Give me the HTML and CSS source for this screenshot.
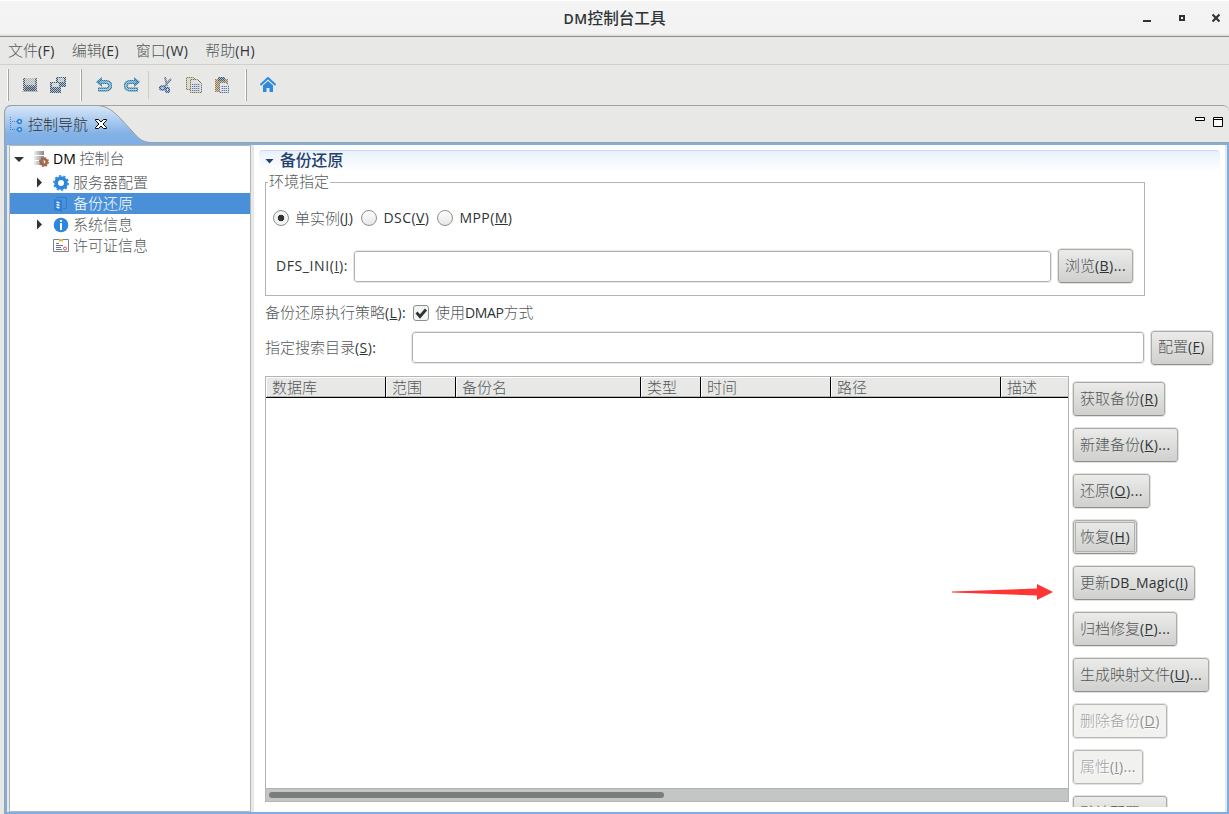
FILE: index.html
```html
<!DOCTYPE html>
<html lang="zh-CN">
<head>
    <meta charset="UTF-8">
    <title>DM控制台工具</title>
    <link rel="stylesheet" href="styles.css">
</head>
<body>
    <header class="titlebar">
        <h1><span class="en">DM</span>控制台工具</h1>
        <div class="window-buttons">
            <svg width="8" height="10"><path d="M0 8h8" stroke="#2e3436" stroke-width="2"/></svg>
            <svg width="6" height="10"><path d="M1 3h4v4h-4z" fill="none" stroke="#2e3436" stroke-width="2"/></svg>
            <svg width="8" height="10"><path d="M.5 1.500l7 7M7.500 1.500l-7 7" stroke="#2e3436" stroke-width="2.200"/></svg>
        </div>
    </header>
    <nav class="menubar">
        <span>文件<span class="en">(F)</span></span>
        <span>编辑<span class="en">(E)</span></span>
        <span>窗口<span class="en">(W)</span></span>
        <span>帮助<span class="en">(H)</span></span>
    </nav>

    <svg class="defs" width="0" height="0">
        <defs>
            <pattern id="dither" width="2" height="2" patternUnits="userSpaceOnUse">
                <path d="M0 0h1v1h-1zM1 1h1v1h-1z" fill="#e8e8e6"/>
            </pattern>
            <linearGradient id="tab-fill" x1="0" y1="0" x2="0" y2="1">
                <stop offset="0" stop-color="#d9e7f8"/>
                <stop offset=".75" stop-color="#83b2e6"/>
                <stop offset="1" stop-color="#7eaee4"/>
            </linearGradient>
            <linearGradient id="server-fill">
                <stop offset="0" stop-color="#eee"/>
                <stop offset="1" stop-color="#888"/>
            </linearGradient>
        </defs>
    </svg>

    <div class="toolbar">
        <div class="tool-group save-group">
            <svg width="16" height="16" viewBox="0 0 16 16"><path d="M1 1h14v14h-14z" fill="#4a5b72"/><path d="M3 1h10v7h-10z" fill="#aab8be"/><path d="M0 14.500h16" stroke="#b9bab8"/><path d="M1 1h14v13h-14z" fill="url(#dither)" opacity=".8"/><path d="M3 10h10v4h-10z" fill="#4a5b72" opacity=".4"/></svg>
            <svg width="16" height="16" viewBox="0 0 16 16"><path d="M6 0h10v10h-10z" fill="#3b5674"/><path d="M8 1h6v4h-6z" fill="#b3c0c7"/><path d="M0 5h11v11h-11z" fill="#3b5674"/><path d="M2 6h7v4h-7z" fill="#c5ced3"/><path d="M0 0h16v16h-16z" fill="url(#dither)" opacity=".75"/></svg>
        </div>
        <div class="tool-group edit-group">
            <svg width="16" height="16" viewBox="0 0 16 16"><path d="M3 5h7.500a3.700 3.700 0 0 1 0 7.500H2" fill="none" stroke="#2b78a8" stroke-width="4"/><path d="M0 5l6-5v10z" fill="#2b78a8"/><path d="M4 5h6.500a3.700 3.700 0 0 1 0 7.500H3" fill="none" stroke="#a8cfe4" stroke-width="1.200"/><path d="M0 0h16v16h-16z" fill="url(#dither)" opacity=".45"/></svg>
            <svg width="16" height="16" viewBox="0 0 16 16"><path d="M13 5H5.500a3.700 3.700 0 0 0 0 7.500H14" fill="none" stroke="#2b78a8" stroke-width="4"/><path d="M16 5l-6-5v10z" fill="#2b78a8"/><path d="M12 5H5.500a3.700 3.700 0 0 0 0 7.500H13" fill="none" stroke="#a8cfe4" stroke-width="1.200"/><path d="M0 0h16v16h-16z" fill="url(#dither)" opacity=".45"/></svg>
            <i class="divider"></i>
            <svg width="16" height="16" viewBox="0 0 16 16"><path d="M7 0l2 9M13 2l-7 8" stroke="#60778f" stroke-width="2"/><g fill="none" stroke="#2c5c90" stroke-width="2"><ellipse cx="4.500" cy="11" rx="2.600" ry="1.800"/><ellipse cx="9.500" cy="13" rx="1.600" ry="2.200"/></g><path d="M0 0h16v16h-16z" fill="url(#dither)" opacity=".6"/></svg>
            <svg width="16" height="16" viewBox="0 0 16 16"><path d="M.5.500h7l3 3v9h-10z" fill="#d4d2c8" stroke="#8f7c4d"/><path d="M4.500 2.500h7l4 4v9h-11z" fill="#d8dce2" stroke="#80724a"/><path d="M6 7.500h8M6 9.500h8M6 11.500h8M6 13.500h8" stroke="#6078a0"/><path d="M0 0h16v16h-16z" fill="url(#dither)" opacity=".65"/></svg>
            <svg width="16" height="16" viewBox="0 0 16 16"><path d="M1 2h13v13h-13z" fill="#a07c46"/><path d="M4 0h7v4h-7z" fill="#40586e"/><path d="M5.500 5.500h6l3 3v7h-9z" fill="#e0e4ea" stroke="#5f7392"/><path d="M7 9.500h6M7 11.500h6M7 13.500h6" stroke="#6078a0"/><path d="M0 0h16v16h-16z" fill="url(#dither)" opacity=".65"/></svg>
        </div>
        <div class="tool-group home-group">
            <svg width="16" height="16" viewBox="0 0 16 16"><path d="M.5 8L8 1l7.500 7" fill="none" stroke="#2d89dc" stroke-width="2"/><path d="M3 8.500l5-4.500 5 4.500V15H9.500v-4h-3v4H3z" fill="#2d89dc"/></svg>
        </div>
    </div>

    <main class="workbench">
        <div class="tabstrip">
            <svg class="tab-shape" width="146" height="38"><path d="M0 38V8Q0 1 7 .5H92C104 .5 110 7 117 14L128 26C134 33 138 37 146 37.500V38z" fill="url(#tab-fill)"/><path d="M.5 38V8Q.5 1.500 7 .5H92C104 .5 110 7 117 14L128 26C134 33 138 37 146 37.500" fill="none" stroke="#9b9e9c"/></svg>
            <div class="tab">
                <svg width="14" height="16"><path d="M1.500 0v14M1 4.500h7M1 12.500h7" fill="none" stroke="#3987d5" stroke-dasharray="1 1"/><g fill="#d6e6f7" stroke="#2d87dc" stroke-width="1.600"><circle cx="10.500" cy="4.500" r="1.900"/><circle cx="10.500" cy="12.500" r="1.900"/></g></svg>
                <span>控制导航</span>
                <svg class="close" width="12" height="12" viewBox="0 0 12 12"><path d="M.5 1.500h3L6 4l2.500-2.500h3v1L8 6l3.500 3.500v1h-3L6 8l-2.500 2.500h-3v-1L4 6 .5 2.500z" fill="#fff" stroke="#000"/></svg>
            </div>
            <div class="view-buttons">
                <svg width="10" height="10"><path d="M.5.500h9v3h-9z" fill="#fff" stroke="#000"/></svg>
                <svg width="10" height="10"><path d="M.5.500h9v9h-9zM0 2.500h10" fill="#fff" stroke="#000"/></svg>
            </div>
        </div>

        <div class="view">
            <aside class="tree">
                <div class="node root">
                    <i class="arrow-down"></i>
                    <svg width="16" height="16" viewBox="0 0 16 16"><path d="M0 0h10v4h-10zM0 5h10v4h-10zM0 10h10v4h-10z" fill="url(#server-fill)"/><circle cx="10" cy="11" r="2.800" fill="none" stroke="#a9674c" stroke-width="2.800"/><circle cx="10" cy="11" r="4.500" fill="none" stroke="#a9674c" stroke-width="1.200" stroke-dasharray="1.700 1.830"/></svg>
                    <span><span class="en">DM</span> 控制台</span>
                </div>
                <div class="node">
                    <i class="arrow-right"></i>
                    <svg width="16" height="16" viewBox="0 0 16 16"><circle cx="8" cy="8" r="4.900" fill="none" stroke="#2d87dc" stroke-width="3.800"/><circle cx="8" cy="8" r="7.200" fill="none" stroke="#2d87dc" stroke-width="1.400" stroke-dasharray="2.260 2.260"/></svg>
                    <span>服务器配置</span>
                </div>
                <div class="node selected">
                    <i></i>
                    <svg width="16" height="16" viewBox="0 0 16 16"><path d="M3 1.500h10.500v11H10" fill="none" stroke="#2d80d4"/><path d="M1 3l8 1v12l-8-2z" fill="#2d80d4"/><path d="M3.500 6l3 1M3.500 8.500l3 1M3.500 11l3 1" stroke="#e5f0fb" stroke-width="1.800"/></svg>
                    <span>备份还原</span>
                </div>
                <div class="node">
                    <i class="arrow-right"></i>
                    <svg width="16" height="16" viewBox="0 0 16 16"><circle cx="8" cy="8" r="7.300" fill="#2d87dc"/><path d="M7 3h2v2H7zM7 6h2v7H7z" fill="#fff"/></svg>
                    <span>系统信息</span>
                </div>
                <div class="node">
                    <i></i>
                    <svg width="16" height="16" viewBox="0 0 16 16"><path d="M.5 1.500h15v12H.5z" fill="#fff" stroke="#72829b"/><path d="M3 5.500h3M3 7.500h7M3 9.500h5M3 11.500h6" stroke="#657793"/><path d="M6 1h4v3L8 3 6 4z" fill="#efb92c"/><circle cx="12" cy="10.500" r="1.500" fill="#fff" stroke="#e04757"/></svg>
                    <span>许可证信息</span>
                </div>
            </aside>

            <section class="form">
                <h2><i class="twistie"></i><span>备份还原</span></h2>
                <div class="form-body">
                    <fieldset class="environment">
                        <legend>环境指定</legend>
                        <div class="radios">
                            <label><i class="radio checked"></i>单实例<span class="en">(<u>J</u>)</span></label>
                            <label><i class="radio"></i><span class="en">DSC(<u>V</u>)</span></label>
                            <label><i class="radio"></i><span class="en">MPP(<u>M</u>)</span></label>
                        </div>
                        <div class="ini-row">
                            <label class="en">DFS_INI(<u>I</u>):</label>
                            <input type="text">
                            <button>浏览<span class="en">(<u>B</u>)...</span></button>
                        </div>
                    </fieldset>
                    <div class="strategy-row">
                        <label>备份还原执行策略<span class="en">(<u>L</u>):</span></label>
                        <svg class="checkbox" width="16" height="16" viewBox="0 0 16 16"><rect x=".5" y=".5" width="15" height="15" rx="2.500" fill="#f4f4f3" stroke="#8d918b"/><path d="M3.500 7.500l3.500 4 6-7" fill="none" stroke="#2e3436" stroke-width="2.800"/></svg>
                        <span>使用<span class="en tight">DMAP</span>方式</span>
                    </div>
                    <div class="search-row">
                        <label>指定搜索目录<span class="en">(<u>S</u>):</span></label>
                        <input type="text">
                        <button>配置<span class="en">(<u>F</u>)</span></button>
                    </div>
                    <div class="backup-area">
                        <div class="backup-table">
                            <div class="thead">
                                <span>数据库</span>
                                <span>范围</span>
                                <span>备份名</span>
                                <span>类型</span>
                                <span>时间</span>
                                <span>路径</span>
                                <span>描述</span>
                            </div>
                            <div class="tbody"></div>
                            <div class="scrollbar"><div class="thumb"></div></div>
                            <svg class="pointer" width="102" height="18"><path d="M0 8.500L85 5.500V1l16 8-16 8v-4.500L0 9.500z" fill="#ff3434"/></svg>
                        </div>
                        <div class="actions">
                            <button>获取备份<span class="en">(<u>R</u>)</span></button>
                            <button>新建备份<span class="en">(<u>K</u>)...</span></button>
                            <button>还原<span class="en">(<u>O</u>)...</span></button>
                            <button class="focused">恢复<span class="en">(<u>H</u>)</span></button>
                            <button>更新<span class="en magic">DB_Magic(<u>I</u>)</span></button>
                            <button>归档修复<span class="en">(<u>P</u>)...</span></button>
                            <button>生成映射文件<span class="en">(<u>U</u>)...</span></button>
                            <button disabled>删除备份<span class="en">(<u>D</u>)</span></button>
                            <button disabled>属性<span class="en">(<u>I</u>)...</span></button>
                            <button>默认配置<span class="en">(<u>N</u>)</span></button>
                        </div>
                    </div>
                </div>
            </section>
        </div>
    </main>
</body>
</html>
```
FILE: styles.css
```css
* {
    box-sizing: border-box;
}
body {
    margin: 0;
    height: 814px;
    overflow: hidden;
    display: flex;
    flex-direction: column;
    background: #e8e8e6;
    color: #53585a;
    font: 300 15px/20px "Noto Sans CJK SC", sans-serif;
}
svg {
    display: block;
    flex: none;
}
.defs {
    position: absolute;
}
.en {
    color: #2e3436;
    font: 400 14px/20px "Open Sans", sans-serif;
    letter-spacing: .45px;
}
.tight {
    letter-spacing: -.4px;
}
.magic {
    letter-spacing: .2px;
}
u {
    text-underline-offset: 1px;
}
.titlebar {
    height: 37px;
    flex: none;
    position: relative;
    background: linear-gradient(#fff 1px, #f4f4f4 1px, #f2f2f2 34px, #deded9 35px);
    border-bottom: 1px solid #8f918c;
}
.titlebar h1 {
    margin: 0;
    padding-top: 7px;
    text-align: center;
    color: #2e3436;
    font-size: 15.6px;
    font-weight: 500;
    line-height: 20px;
}
.titlebar .en {
    font-size: 14px;
    font-weight: 600;
}
.window-buttons {
    position: absolute;
    right: 9px;
    top: 13px;
    display: flex;
    gap: 27px;
}
.window-buttons svg:first-child {
    margin-right: 1px;
}
.menubar {
    height: 28px;
    flex: none;
    display: flex;
    gap: 16.8px;
    padding: 3px 8px 5px;
    border-bottom: 1px solid #d0d1cf;
    white-space: nowrap;
}
.toolbar {
    height: 40px;
    flex: none;
    display: flex;
    padding: 4px 0 5px 7px;
}
.tool-group {
    height: 32px;
    display: flex;
    align-items: center;
    gap: 12px;
    border-left: 1px solid #fff;
    box-shadow: inset 1px 0 #a2a5a2;
    padding-left: 14px;
}
.save-group {
    width: 73px;
}
.edit-group {
    width: 165px;
    padding-left: 15px;
}
.divider {
    width: 1px;
    height: 28px;
    margin: 0 -3px 0 -4px;
    background: #ccceca;
}
.workbench {
    flex: 1;
    min-height: 0;
    display: flex;
    flex-direction: column;
    margin-left: 4px;
}
.tabstrip {
    height: 38px;
    flex: none;
    position: relative;
    border-top: 1px solid #a1a3a1;
    border-bottom: 1px solid #a1a3a1;
    border-radius: 7px 6px 0 0;
    display: flex;
    justify-content: space-between;
}
.tab-shape {
    position: absolute;
    left: 0;
    top: -1px;
}
.tab {
    position: relative;
    display: flex;
    align-items: center;
    gap: 6px;
    padding-left: 5px;
    height: 37px;
    color: #2e3436;
}
.tab span {
    margin: -1px 1px 0 -1px;
}
.close {
    margin-top: -1px;
}
.view-buttons {
    display: flex;
    gap: 8px;
    padding: 11px 6px 0 0;
}
.view {
    flex: 1;
    min-height: 0;
    display: flex;
    margin-left: 1px;
    background: #e8e8e6;
    border: 2px solid #7eaee4;
    box-shadow: -1px 0 #a1a3a1;
}
.tree {
    width: 242px;
    flex: none;
    margin-left: 2px;
    border: 1px solid #b6b6b3;
    background: #fff;
}
.node {
    height: 21px;
    display: flex;
    align-items: center;
    padding-left: 23px;
    line-height: 21px;
}
.node svg {
    margin: 0 4px 0 9px;
}
.node span {
    margin-top: -2px;
}
.node .en {
    color: #000;
    letter-spacing: .2px;
}
.node i {
    width: 11px;
    height: 12px;
}
.root {
    height: 26px;
    padding-left: 4px;
}
.root svg {
    margin: 0 3px 0 9px;
}
.selected {
    background: #4a90d9;
    color: #fff;
}
.node .arrow-right {
    background: #2e3436;
    clip-path: polygon(4px 1px, 9px 6px, 4px 11px);
}
.node .arrow-down {
    background: #2e3436;
    clip-path: polygon(0 4px, 10px 4px, 5px 9px);
}
.form {
    flex: 1;
    min-width: 0;
    margin: 0 2px 0 3px;
    padding: 5px 5px 5px;
    background: #fff;
    display: flex;
    flex-direction: column;
}
.form h2 {
    flex: none;
    height: 22px;
    margin: 0;
    display: flex;
    align-items: center;
    color: #24416b;
    font-size: 15.8px;
    font-weight: 500;
    border-top: 1px solid #c5d9f2;
    border-radius: 4px;
    background: linear-gradient(#eaf1fc, #fff);
}
.form h2 span {
    margin-top: -3px;
}
.twistie {
    width: 9px;
    height: 5px;
    margin: -1px 6px 0 6px;
    background: #24416b;
    clip-path: polygon(0 0, 9px 0, 4.500px 5px);
}
.form-body {
    flex: 1;
    min-height: 0;
    padding-left: 6px;
    display: flex;
    flex-direction: column;
}
.environment {
    width: 880px;
    height: 124px;
    flex: none;
    margin: 0;
    padding: 16px 10px 0;
    border: 1px solid #b4b4b0;
}
.environment legend {
    position: relative;
    top: -1px;
    margin-left: -8px;
    padding: 0 1px;
    height: 20px;
}
.radios,
.radios label,
.ini-row,
.strategy-row,
.search-row {
    display: flex;
    align-items: center;
}
.radios {
    gap: 11px;
}
.radio {
    width: 16px;
    height: 16px;
    margin: 0 6px 0 -3px;
    border: 1px solid #8d918b;
    border-radius: 50%;
    background: linear-gradient(#fff, #e6e6e4);
}
.radio.checked {
    background: radial-gradient(circle, #2e3436 3px, #f3f3f2 3.600px);
}
.ini-row {
    margin-top: 21px;
}
.ini-row label {
    width: 78px;
    letter-spacing: .6px;
}
input {
    height: 31px;
    padding: 0;
    border: 1px solid #b0b0ac;
    border-radius: 3px;
    outline: 1px solid #e8e8e6;
    background: #fff;
}
.ini-row input {
    width: 697px;
}
button {
    height: 34px;
    padding: 0 6px 2px;
    border: 1px solid #a9aba6;
    border-bottom-color: #8f918c;
    border-radius: 3px;
    outline: 1px solid #e2e2e0;
    background: linear-gradient(#ebebea, #d0d0ce);
    color: inherit;
    font: inherit;
    white-space: nowrap;
    text-align: left;
}
.ini-row button {
    width: 75px;
    margin-left: 7px;
}
button:disabled {
    background: #f1f1f0;
    border-color: #b8b8b5;
    color: #a0a4a5;
    text-shadow: 1px 1px #fff;
}
button:disabled .en {
    color: #8b8f90;
}
.strategy-row {
    height: 33px;
}
.checkbox {
    margin: 1px 6px 0 7px;
}
.search-row {
    height: 37px;
}
.search-row label {
    width: 147px;
}
.search-row input {
    width: 732px;
}
.search-row button {
    width: 62px;
    margin-left: 7px;
}
.backup-area {
    flex: 1;
    min-height: 0;
    display: flex;
    padding-top: 10px;
}
.backup-table {
    position: relative;
    width: 804px;
    height: 426px;
    border: 1px solid #b4b4b0;
    display: flex;
    flex-direction: column;
}
.thead {
    display: grid;
    grid-template-columns: 120px 70px 185px 60px 130px 170px 1fr;
    height: 21px;
    border-bottom: 1px solid #000;
    background: #e8e8e6;
    line-height: 20px;
}
.thead span {
    padding-left: 6px;
    border-right: 1px solid #000;
    box-shadow: inset 1px 1px #fff, inset 0 -1px #b4b4b0;
}
.thead span:last-child {
    border-right: none;
}
.tbody {
    flex: 1;
}
.scrollbar {
    height: 13px;
    border-top: 1px solid #b0b3b2;
    background: #c4c6c5;
    padding: 3px;
}
.thumb {
    width: 395px;
    height: 6px;
    border-radius: 3px;
    background: #7a7d7d;
}
.pointer {
    position: absolute;
    left: 686px;
    top: 206px;
}
.actions {
    flex: 1;
    padding: 6px 0 0 4px;
    overflow: hidden;
    display: flex;
    flex-direction: column;
    align-items: flex-start;
    gap: 12px;
}
.actions button {
    flex: none;
}
.focused {
    box-shadow: inset 0 0 0 1px #dededc, inset 0 0 0 2px #b1b2af;
}
```
